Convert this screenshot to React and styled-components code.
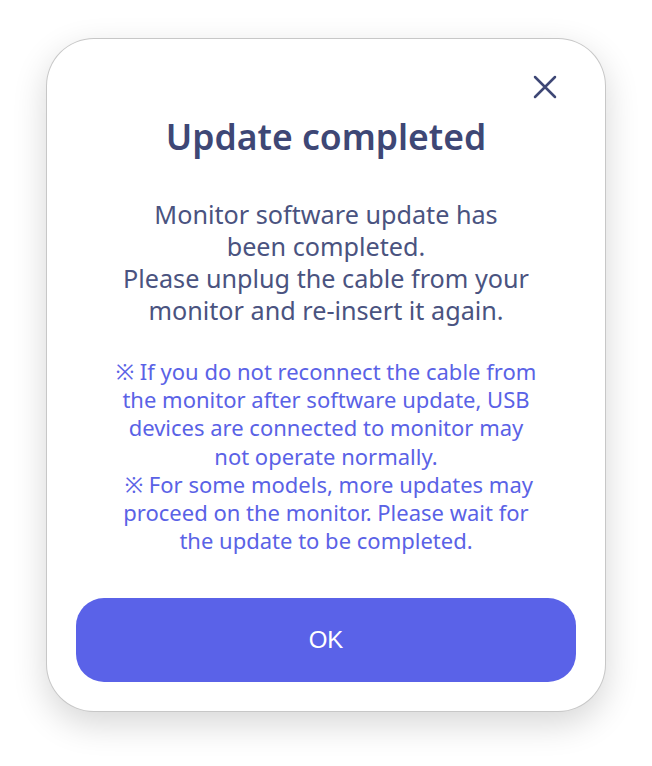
import styled, { createGlobalStyle } from "styled-components";

const GlobalStyle = createGlobalStyle`
  html, body {
    margin: 0;
    padding: 0;
    background: #ffffff;
  }
  body {
    font-family: "Noto Sans", "Open Sans", sans-serif;
  }
`;

export default () => (
  <Page>
    <GlobalStyle />
    <Dialog>
      <CloseButton aria-label="Close">
        <svg width="24" height="24" viewBox="0 0 24 24">
          <path d="M2 2 L22 22 M22 2 L2 22" stroke="#3e4775" strokeWidth="2.5" strokeLinecap="round" />
        </svg>
      </CloseButton>
      <Title>Update completed</Title>
      <Message>
        Monitor software update has
        <br />
        been completed.
        <br />
        Please unplug the cable from your
        <br />
        monitor and re-insert it again.
      </Message>
      <Notice>
        ※ If you do not reconnect the cable from
        <br />
        the monitor after software update, USB
        <br />
        devices are connected to monitor may
        <br />
        not operate normally.
        <br />
        &nbsp;※ For some models, more updates may
        <br />
        proceed on the monitor. Please wait for
        <br />
        the update to be completed.
      </Notice>
      <OkButton>OK</OkButton>
    </Dialog>
  </Page>
);

const Page = styled.div`
  width: 652px;
  height: 766px;
  padding-top: 38px;
  padding-left: 46px;
  box-sizing: border-box;
`;

const Dialog = styled.div`
  position: relative;
  width: 560px;
  height: 674px;
  box-sizing: border-box;
  background: #ffffff;
  border-radius: 48px;
  border: 1px solid rgba(0, 0, 0, 0.22);
  box-shadow: 0 12px 34px rgba(0, 0, 0, 0.16);
  display: flex;
  flex-direction: column;
  align-items: center;
  padding: 76px 20px 29px;
`;

const CloseButton = styled.button`
  position: absolute;
  top: 36px;
  right: 48px;
  width: 24px;
  height: 24px;
  padding: 0;
  border: none;
  background: none;
  display: flex;
`;

const Title = styled.h1`
  margin: 0;
  color: #3e4775;
  font-size: 35.5px;
  font-weight: 600;
  line-height: 42px;
`;

const Message = styled.p`
  margin: 41px 0 0;
  color: #4a5380;
  font-size: 25.2px;
  line-height: 32px;
  text-align: center;
`;

const Notice = styled.p`
  margin: 31px 0 0;
  color: #5a62e6;
  font-size: 22px;
  line-height: 28.2px;
  text-align: center;
`;

const OkButton = styled.button`
  margin-top: auto;
  width: 500px;
  height: 84px;
  border: none;
  border-radius: 28px;
  background: #5a62e8;
  color: #ffffff;
  font-family: "Liberation Sans", Arial, sans-serif;
  font-size: 24px;
`;
